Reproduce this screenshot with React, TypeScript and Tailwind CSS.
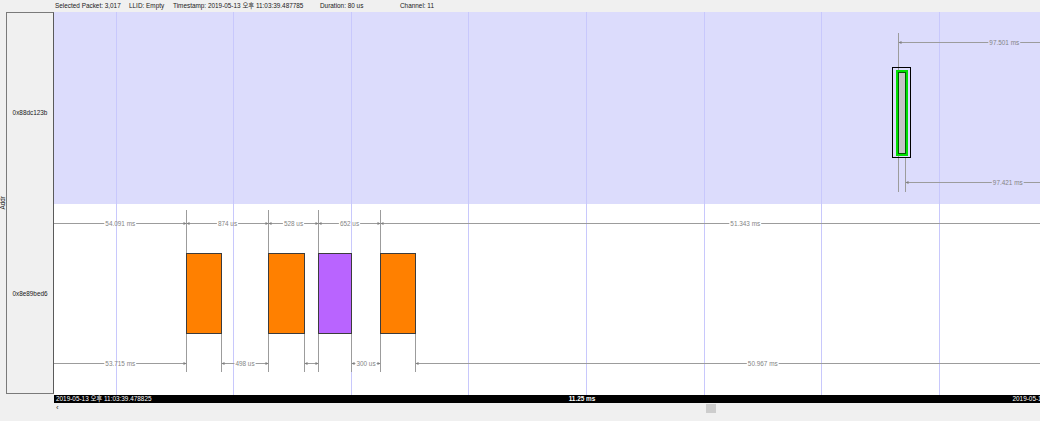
import React from "react";

const FONT = "font-['Liberation_Sans','Noto_Sans_CJK_KR',Arial,sans-serif]";

// arial-ish widths per em, used to leave a gap in the line behind each label
const W: Record<string, number> = { ".": 0.278, " ": 0.278, m: 0.833, s: 0.5, u: 0.556 };
const textWidth = (s: string, size: number) =>
    s.split("").reduce((sum, c) => sum + (W[c] ?? 0.556), 0) * size;

type Measure = { y: number; x1: number; x2: number; label?: string; arrowL?: boolean; arrowR?: boolean };

const GRID = Array.from({ length: 9 }, (_, i) => Math.round(115.7 + 117.6 * i) + 0.5);

const MEASURES: Measure[] = [
    { y: 42.5, x1: 898.5, x2: 1110, label: "97.501 ms", arrowL: true },
    { y: 182.5, x1: 905.5, x2: 1110, label: "97.421 ms", arrowL: true },
    { y: 223.5, x1: 54, x2: 186.5, label: "54.091 ms", arrowR: true },
    { y: 223.5, x1: 186.5, x2: 268.5, label: "874 us", arrowL: true, arrowR: true },
    { y: 223.5, x1: 268.5, x2: 318.5, label: "528 us", arrowL: true, arrowR: true },
    { y: 223.5, x1: 318.5, x2: 380.5, label: "652 us", arrowL: true, arrowR: true },
    { y: 223.5, x1: 380.5, x2: 1110, label: "51.343 ms", arrowL: true },
    { y: 363.5, x1: 54, x2: 186.5, label: "53.715 ms", arrowR: true },
    { y: 363.5, x1: 221.5, x2: 268.5, label: "498 us", arrowL: true, arrowR: true },
    { y: 363.5, x1: 304.5, x2: 318.5, arrowL: true, arrowR: true },
    { y: 363.5, x1: 351.5, x2: 380.5, label: "300 us", arrowL: true, arrowR: true },
    { y: 363.5, x1: 415.5, x2: 1110, label: "50.967 ms", arrowL: true },
];

const PACKETS = [
    { x1: 186, x2: 221, fill: "#ff8000" },
    { x1: 268, x2: 304, fill: "#ff8000" },
    { x1: 318, x2: 351, fill: "#b964ff" },
    { x1: 380, x2: 415, fill: "#ff8000" },
];

const LINE = "#9c9c9c";

const Timeline = () => (
    <svg
        className="absolute inset-0"
        width={1056}
        height={383}
        viewBox="54 12 1056 383"
        fontFamily="'Liberation Sans', Arial, sans-serif"
    >
        {GRID.map(x => (
            <line key={x} x1={x} x2={x} y1={12} y2={395} stroke="#c8c8fc" strokeWidth={1} />
        ))}

        {/* edge ticks */}
        <line x1={898.5} x2={898.5} y1={33} y2={192} stroke={LINE} />
        <line x1={905.5} x2={905.5} y1={157} y2={192} stroke={LINE} />
        {PACKETS.map(p => (
            <g key={p.x1}>
                <line x1={p.x1 + 0.5} x2={p.x1 + 0.5} y1={210} y2={372} stroke={LINE} />
                <line x1={p.x2 + 0.5} x2={p.x2 + 0.5} y1={333} y2={372} stroke={LINE} />
            </g>
        ))}

        {MEASURES.map((m, i) => {
            const cx = (m.x1 + m.x2) / 2;
            const w = m.label ? textWidth(m.label, 6.4) : 0;
            return (
                <g key={i}>
                    {m.label ? (
                        <>
                            <line x1={m.x1} x2={cx - w / 2 - 1} y1={m.y} y2={m.y} stroke={LINE} />
                            <line x1={cx + w / 2 + 1} x2={m.x2} y1={m.y} y2={m.y} stroke={LINE} />
                            <text x={cx} y={m.y + 2.3} fontSize={6.4} fill="#858585" textAnchor="middle">
                                {m.label}
                            </text>
                        </>
                    ) : (
                        <line x1={m.x1} x2={m.x2} y1={m.y} y2={m.y} stroke={LINE} />
                    )}
                    {m.arrowL && (
                        <polygon
                            points={`${m.x1},${m.y} ${m.x1 + 3},${m.y - 1.5} ${m.x1 + 3},${m.y + 1.5}`}
                            fill="#808080"
                        />
                    )}
                    {m.arrowR && (
                        <polygon
                            points={`${m.x2},${m.y} ${m.x2 - 3},${m.y - 1.5} ${m.x2 - 3},${m.y + 1.5}`}
                            fill="#808080"
                        />
                    )}
                </g>
            );
        })}

        {PACKETS.map(p => (
            <rect
                key={p.x1}
                x={p.x1 + 0.5}
                y={253.5}
                width={p.x2 - p.x1}
                height={80}
                fill={p.fill}
                stroke="#3c3c3c"
            />
        ))}

        {/* selected packet */}
        <rect x={892.5} y={67.5} width={18} height={90} fill="none" stroke="#000" />
        <rect x={897} y={71} width={10} height={84} fill="none" stroke="#00e000" strokeWidth={2} />
        <rect x={898.5} y={72.5} width={7} height={81} fill="#c4c4c4" stroke="#005a00" />
    </svg>
);

export default function App() {
    return (
        <div className={`w-[1040px] h-[421px] overflow-hidden bg-[#f0f0f0] text-[6.4px] leading-none text-[#1a1a1a] ${FONT}`}>
            <div className="h-[12px] flex items-center pl-[55px] whitespace-nowrap">
                <span className="w-[74px]">Selected Packet: 3,017</span>
                <span className="w-[44px]">LLID: Empty</span>
                <span className="w-[147px]">Timestamp: 2019-05-13 오후 11:03:39.487785</span>
                <span className="w-[80px]">Duration: 80 us</span>
                <span>Channel: 11</span>
            </div>

            <div className="flex h-[383px] w-[1110px]">
                <div className="w-[6px] shrink-0 flex items-center justify-center">
                    <span className="[writing-mode:vertical-rl] rotate-180 -mt-[2px]">Addr</span>
                </div>
                <div className="w-[48px] h-[382px] shrink-0 flex flex-col border border-[#7a7a7a] border-r-[#5a5a5a]">
                    <div className="h-[191px] flex items-center justify-center pt-[9px]">0x88dc123b</div>
                    <div className="flex-1 flex items-center justify-center pb-[8px]">0x8e89bed6</div>
                </div>
                <div className="relative w-[1056px] shrink-0 flex flex-col">
                    <div className="h-[192px] bg-[#dcdcfc]" />
                    <div className="flex-1 bg-white" />
                    <Timeline />
                </div>
            </div>

            <div className="flex w-[1110px]">
                <div className="w-[54px] shrink-0" />
                <div className="w-[1056px] h-[8px] shrink-0 bg-black text-white grid grid-cols-[1fr_auto_1fr] items-center px-[2px] whitespace-nowrap">
                    <span>2019-05-13 오후 11:03:39.478825</span>
                    <span className="font-bold">11.25 ms</span>
                    <span className="justify-self-end">2019-05-13 오후 11:03:39.490075</span>
                </div>
            </div>

            <div className="flex items-center h-[10px] w-[1110px]">
                <span className="w-[10px] ml-[56px] text-[8px] text-[#333]">‹</span>
                <div className="ml-[640px] w-[10px] h-[9px] bg-[#cdcdcd]" />
            </div>
        </div>
    );
}
